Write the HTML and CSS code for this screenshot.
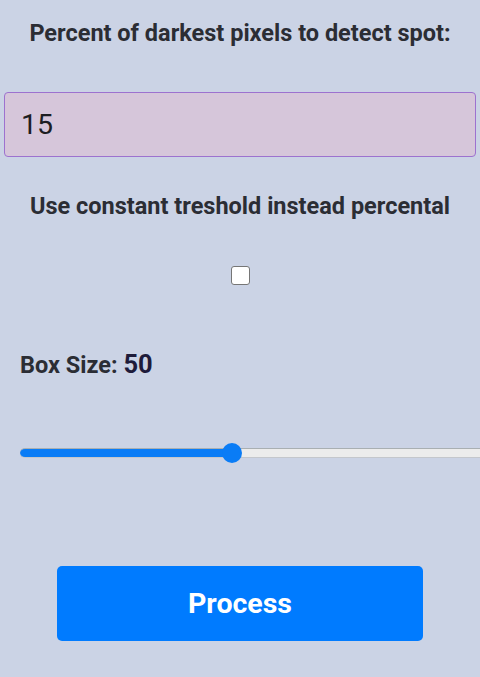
FILE: index.html
```html
<!DOCTYPE html>
<html lang="en">
<head>
<meta charset="utf-8">
<title>Spot detection</title>
<link rel="stylesheet" href="styles.css">
</head>
<body>
<main class="form">
  <label class="title" for="percent">Percent of darkest pixels to detect spot:</label>
  <input id="percent" class="num-input" type="text" value="15">
  <label class="title title-2" for="constant">Use constant treshold instead percental</label>
  <div class="check-row"><input id="constant" class="check" type="checkbox"></div>
  <div class="box-label">Box Size: <span class="box-value">50</span></div>
  <div class="slider-row"><input class="slider" type="range" min="10" max="100" value="50"></div>
  <div class="btn-row"><button class="process-btn" type="button">Process</button></div>
</main>
</body>
</html>
```
FILE: styles.css
```css
html, body {
  margin: 0;
  padding: 0;
  overflow: hidden;
}
body {
  background: #cbd3e5;
  font-family: Roboto, "Liberation Sans", sans-serif;
  color: #2b2d34;
  width: 480px;
  height: 677px;
}
.form {
  display: flex;
  flex-direction: column;
  padding: 0 4px;
}
.title {
  display: block;
  text-align: center;
  font-weight: 700;
  font-size: 23.5px;
  line-height: 28px;
  margin-top: 19px;
}
.num-input {
  box-sizing: border-box;
  margin-top: 45px;
  height: 65px;
  width: 472px;
  border: 1px solid #9d72cf;
  border-radius: 4px;
  background: #d6c6da;
  font-family: Roboto, "Liberation Sans", sans-serif;
  font-size: 28.5px;
  color: #1d1d22;
  padding: 0 0 0 16px;
  outline: none;
}
.title-2 {
  margin-top: 35px;
}
.check-row {
  display: flex;
  justify-content: center;
  margin-top: 46px;
}
.check {
  appearance: none;
  -webkit-appearance: none;
  margin: 0;
  width: 19px;
  height: 19px;
  box-sizing: border-box;
  border: 1px solid #767676;
  border-radius: 3px;
  background: #fff;
}
.box-label {
  margin-top: 65px;
  padding-left: 16px;
  font-weight: 700;
  font-size: 23.5px;
  line-height: 28px;
}
.box-value {
  color: #1e1b3a;
  font-size: 25.5px;
}
.slider-row {
  margin-top: 64px;
  padding-left: 16px;
  height: 20px;
}
.slider {
  appearance: none;
  -webkit-appearance: none;
  display: block;
  margin: 0;
  width: 475px;
  height: 20px;
  background: transparent;
}
.slider::-webkit-slider-runnable-track {
  height: 10px;
  border-radius: 5px;
  box-sizing: border-box;
  border-top: 1px solid #a9afb2;
  border-bottom: 1px solid #c4c7cc;
  background: linear-gradient(to right, #0a7cf6 0, #0a7cf6 45%, #ececec 45%, #ececec 100%);
}
.slider::-webkit-slider-thumb {
  -webkit-appearance: none;
  width: 20px;
  height: 20px;
  border-radius: 50%;
  background: #0a7cf6;
  margin-top: -6px;
  border: none;
}
.btn-row {
  display: flex;
  justify-content: center;
  margin-top: 103px;
}
.process-btn {
  width: 366px;
  height: 75px;
  border: none;
  border-radius: 5px;
  background: #007bff;
  color: #fff;
  font-family: Roboto, "Liberation Sans", sans-serif;
  font-weight: 700;
  font-size: 28.5px;
}
```
